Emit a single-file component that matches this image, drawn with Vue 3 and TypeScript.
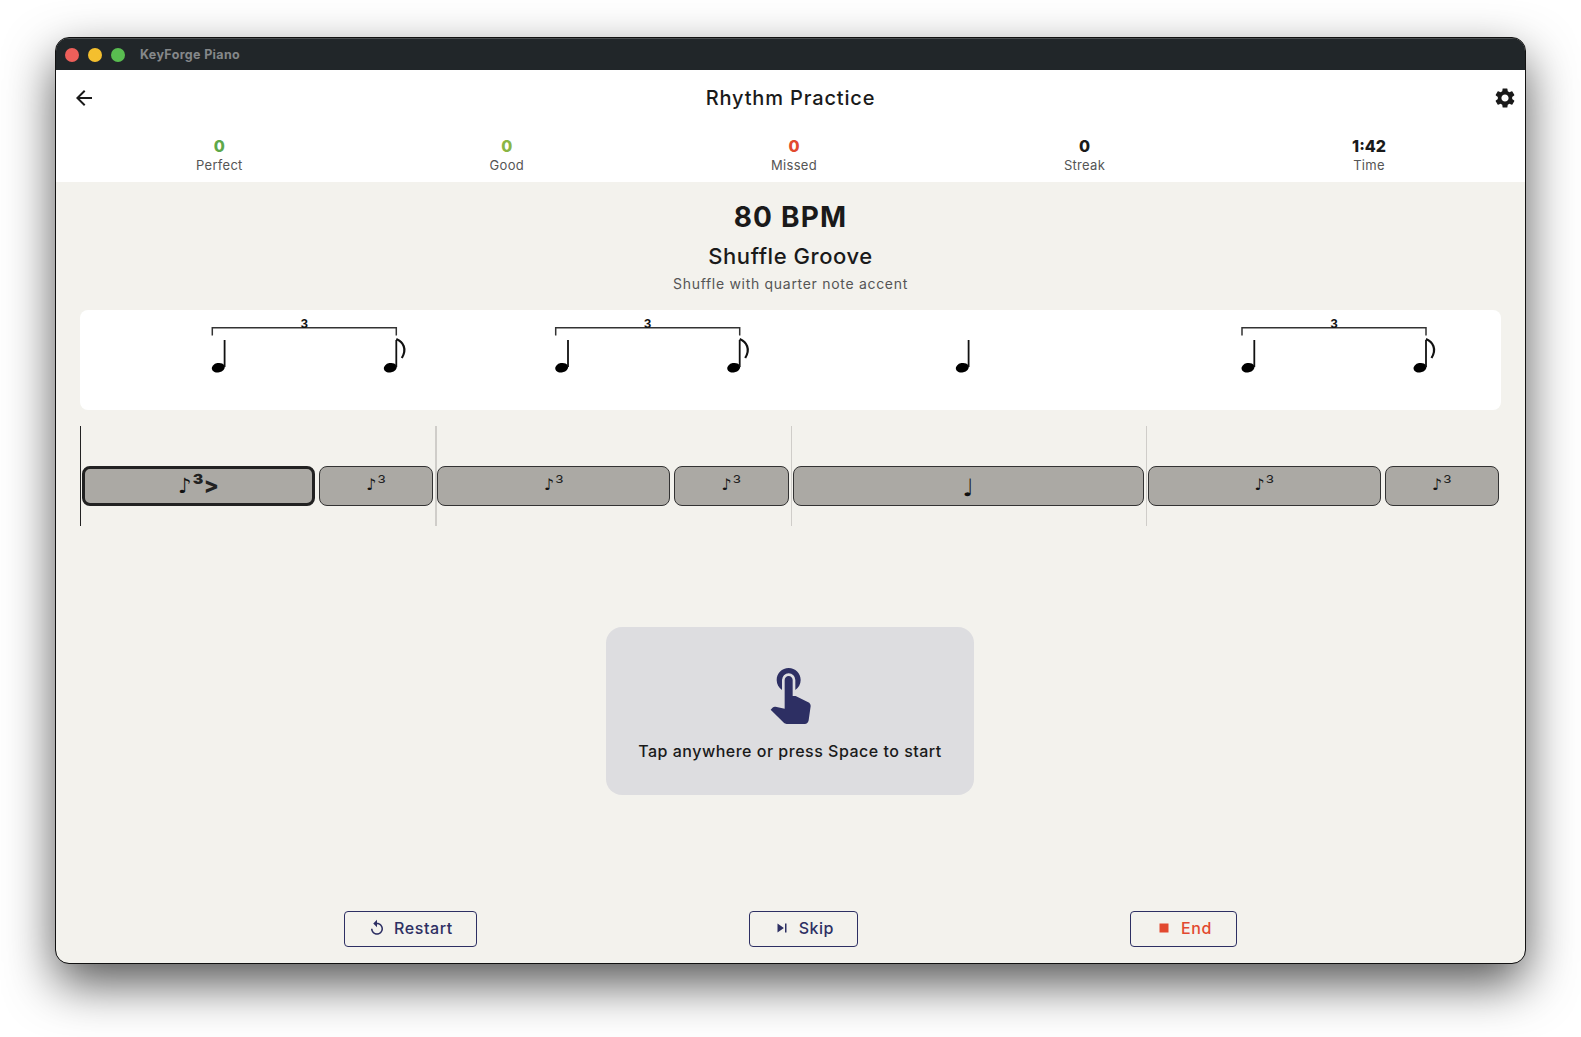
<template>
  <div class="page">
    <div class="window">
      <div class="titlebar">
        <span class="light red"></span>
        <span class="light yellow"></span>
        <span class="light green"></span>
        <span class="app-name">KeyForge Piano</span>
      </div>

      <header class="top">
        <div class="appbar">
          <svg class="icon back" viewBox="0 0 24 24"><path d="M20 11H7.83l5.59-5.59L12 4l-8 8 8 8 1.41-1.41L7.83 13H20v-2z" /></svg>
          <h1>Rhythm Practice</h1>
          <svg class="icon gear" viewBox="0 0 24 24"><path d="M19.14 12.94c.04-.3.06-.61.06-.94 0-.32-.02-.64-.07-.94l2.03-1.58a.49.49 0 0 0 .12-.61l-1.92-3.32a.488.488 0 0 0-.59-.22l-2.39.96c-.5-.38-1.03-.7-1.62-.94l-.36-2.54a.484.484 0 0 0-.48-.41h-3.84c-.24 0-.43.17-.47.41l-.36 2.54c-.59.24-1.13.57-1.62.94l-2.39-.96c-.22-.08-.47 0-.59.22L2.74 8.87c-.12.21-.08.47.12.61l2.03 1.58c-.05.3-.09.63-.09.94s.02.64.07.94l-2.03 1.58a.49.49 0 0 0-.12.61l1.92 3.32c.12.22.37.29.59.22l2.39-.96c.5.38 1.03.7 1.62.94l.36 2.54c.05.24.24.41.48.41h3.84c.24 0 .44-.17.47-.41l.36-2.54c.59-.24 1.13-.56 1.62-.94l2.39.96c.22.08.47 0 .59-.22l1.92-3.32c.12-.22.07-.47-.12-.61l-2.01-1.58zM12 15.6c-1.98 0-3.6-1.62-3.6-3.6s1.62-3.6 3.6-3.6 3.6 1.62 3.6 3.6-1.62 3.6-3.6 3.6z" /></svg>
        </div>
        <div class="stats">
          <div v-for="s in stats" :key="s.label" class="stat">
            <strong :style="{ color: s.color }">{{ s.value }}</strong>
            <span>{{ s.label }}</span>
          </div>
        </div>
      </header>

      <main class="body">
        <div class="bpm">80 BPM</div>
        <div class="name">Shuffle Groove</div>
        <div class="desc">Shuffle with quarter note accent</div>

        <div class="score">
          <svg width="1421" height="100" viewBox="0 0 1421 100">
            <g v-for="x in groups" :key="x">
              <path :d="`M${x} 25.5V17.7H${x + 184}V25.5`" class="bracket" />
              <text :x="x + 92" y="17.5" class="tuplet">3</text>
              <ellipse :cx="x + 6" cy="57.7" rx="6.6" ry="4.7" :transform="`rotate(-12 ${x + 6} 57.7)`" />
              <path :d="`M${x + 12.3} 30V57`" class="stem" />
              <ellipse :cx="x + 178" cy="57.7" rx="6.6" ry="4.7" :transform="`rotate(-12 ${x + 178} 57.7)`" />
              <path :d="`M${x + 184} 30V57`" class="stem" />
              <path :d="`M${x + 184} 29C${x + 191} 32 ${x + 195} 39 ${x + 189.5} 48`" class="flag" />
            </g>
            <ellipse cx="882.3" cy="57.7" rx="6.6" ry="4.7" transform="rotate(-12 882.3 57.7)" />
            <path d="M888.6 30V57" class="stem" />
          </svg>
        </div>

        <div class="timeline">
          <div v-for="b in blocks" :key="b.id" class="slot" :style="{ flexGrow: b.span }">
            <div class="block" :class="{ active: b.active, plain: !b.triplet }">
              <span class="note">{{ b.triplet ? '♪' : '♩' }}</span>
              <span v-if="b.triplet" class="three">³</span>
              <span v-if="b.active" class="accent">&gt;</span>
            </div>
          </div>
          <i v-for="(m, i) in 4" :key="m" class="bar" :class="{ now: i === 0 }" :style="{ left: i * 25 + '%' }"></i>
        </div>

        <div class="prompt-area">
          <div class="prompt">
            <svg class="hand" viewBox="0 0 24 24"><path d="M9 11.24V7.5a2.5 2.5 0 0 1 5 0v3.74c1.21-.81 2-2.18 2-3.74C16 5.01 13.99 3 11.5 3S7 5.01 7 7.5c0 1.56.79 2.93 2 3.74zm9.84 4.63l-4.54-2.26c-.17-.07-.35-.11-.54-.11H13v-6c0-.83-.67-1.5-1.5-1.5S10 6.67 10 7.5v10.74l-3.43-.72c-.08-.01-.15-.03-.24-.03-.31 0-.59.13-.79.33l-.79.8 4.94 4.94c.27.27.65.44 1.06.44h6.79c.75 0 1.33-.55 1.44-1.28l.75-5.27c.01-.07.02-.14.02-.2 0-.62-.38-1.16-.91-1.38z" /></svg>
            <p>Tap anywhere or press Space to start</p>
          </div>
        </div>

        <footer class="actions">
          <button class="btn">
            <svg viewBox="0 0 24 24"><path d="M12 5V1L7 6l5 5V7c3.31 0 6 2.69 6 6s-2.69 6-6 6-6-2.69-6-6H4c0 4.42 3.58 8 8 8s8-3.58 8-8-3.58-8-8-8z" /></svg>
            Restart
          </button>
          <button class="btn">
            <svg viewBox="0 0 24 24"><path d="M6 18l8.5-6L6 6v12zM16 6v12h2V6h-2z" /></svg>
            Skip
          </button>
          <button class="btn end">
            <svg viewBox="0 0 24 24"><path d="M6 6h12v12H6z" /></svg>
            End
          </button>
        </footer>
      </main>
    </div>
  </div>
</template>

<script setup lang="ts">
const stats = [
  { label: 'Perfect', value: '0', color: '#5ea84a' },
  { label: 'Good', value: '0', color: '#8ab545' },
  { label: 'Missed', value: '0', color: '#e2492f' },
  { label: 'Streak', value: '0', color: '#1a1a1a' },
  { label: 'Time', value: '1:42', color: '#1a1a1a' },
]

// left edge of each triplet bracket, card coordinates
const groups = [132.3, 475.7, 1162]

const blocks = [
  { id: 1, span: 2, triplet: true, active: true },
  { id: 2, span: 1, triplet: true },
  { id: 3, span: 2, triplet: true },
  { id: 4, span: 1, triplet: true },
  { id: 5, span: 3, triplet: false },
  { id: 6, span: 2, triplet: true },
  { id: 7, span: 1, triplet: true },
]
</script>

<style>
html,
body {
  background: #fff;
}
</style>

<style scoped>
.page {
  width: 1581px;
  height: 1037px;
  padding: 38px 56px 74px;
  box-sizing: border-box;
  font-family: Inter, "Liberation Sans", sans-serif;
  color: #1a1a1a;
  overflow: hidden;
}

.window {
  height: 100%;
  display: flex;
  flex-direction: column;
  border-radius: 13px;
  overflow: hidden;
  background: #f3f2ed;
  outline: 1px solid #111;
  box-shadow: 0 20px 50px rgba(0, 0, 0, 0.68);
}

.titlebar {
  height: 32px;
  display: flex;
  align-items: center;
  padding-left: 9px;
  gap: 9px;
  background: #212629;
  border-top: 1px solid #4a4e50;
  box-sizing: border-box;
  flex: none;
}

.light {
  width: 14px;
  height: 14px;
  border-radius: 50%;
}
.red { background: #ed5f5a; }
.yellow { background: #f4bf2e; }
.green { background: #59bd50; }

.app-name {
  margin-left: 6px;
  font: 700 12.5px "Inter", sans-serif;
  letter-spacing: 0.35px;
  color: #85888a;
}

.top {
  background: #fff;
  flex: none;
  height: 112px;
  box-sizing: border-box;
}

.appbar {
  height: 56px;
  display: grid;
  grid-template-columns: 1fr auto 1fr;
  align-items: center;
  padding: 0 8px;
}

.appbar h1 {
  margin: 0;
  font-size: 20px;
  font-weight: 500;
  letter-spacing: 0.85px;
}

.icon {
  width: 24px;
  height: 24px;
  fill: #1a1a1a;
}

.back {
  margin-left: 8px;
}

.gear {
  justify-self: end;
}

.stats {
  display: flex;
  justify-content: space-around;
  padding: 12px 15.5px 0 16.5px;
}

.stat {
  display: flex;
  flex-direction: column;
  align-items: center;
  gap: 2px;
}

.stat strong {
  font-size: 16px;
  line-height: 17px;
  font-weight: 800;
}

.stat span {
  font-size: 13px;
  line-height: 16px;
  color: #555;
  letter-spacing: 0.3px;
}

.body {
  flex: 1;
  min-height: 0;
  display: flex;
  flex-direction: column;
  align-items: stretch;
  text-align: center;
}

.bpm {
  margin-top: 18px;
  font-size: 28px;
  line-height: 34px;
  font-weight: 700;
  letter-spacing: 1.2px;
}

.name {
  margin-top: 7px;
  font-size: 22px;
  line-height: 30px;
  font-weight: 500;
  letter-spacing: 0.55px;
}

.desc {
  margin-top: 4px;
  font-size: 14px;
  line-height: 18px;
  color: #555;
  letter-spacing: 0.7px;
}

.score {
  margin: 17px 24px 0;
  height: 100px;
  background: #fff;
  border-radius: 8px;
}

.score svg {
  display: block;
}

.bracket {
  fill: none;
  stroke: #333;
  stroke-width: 1.5;
}

.tuplet {
  font: 700 13px "Liberation Sans", sans-serif;
  text-anchor: middle;
  fill: #111;
}

.stem {
  stroke: #111;
  stroke-width: 1.8;
}

.flag {
  fill: none;
  stroke: #111;
  stroke-width: 2.2;
}

.timeline {
  position: relative;
  display: flex;
  align-items: center;
  height: 100px;
  box-sizing: border-box;
  padding-top: 20px;
  margin: 16px 24px 0;
  flex: none;
}

.slot {
  flex-basis: 0;
  min-width: 0;
}

.block {
  height: 40px;
  margin: 0 2px;
  box-sizing: border-box;
  display: flex;
  align-items: center;
  justify-content: center;
  padding-bottom: 3px;
  background: #aba9a4;
  border: 1px solid #333;
  border-radius: 8px;
  line-height: 1;
  color: #222;
}

.note {
  font: 400 16px "DejaVu Sans", sans-serif;
  color: #111;
}

.three {
  font: 300 20px Inter, sans-serif;
  margin-top: 1px;
  margin-left: 1px;
}

.accent {
  font: 800 22px Inter, sans-serif;
  margin-top: -3px;
}

.block.active {
  border: 3px solid #222;
  padding-bottom: 0;
}

.block.active .note {
  font-size: 21px;
  font-weight: 700;
}

.block.active .three {
  font-size: 24px;
  font-weight: 800;
  margin-top: -2px;
}

.block.plain {
  padding: 3px 0 0;
}

.block.plain .note {
  font-size: 24px;
}

.bar {
  position: absolute;
  top: 0;
  bottom: 0;
  width: 1.5px;
  background: #cfcdc9;
}

.bar.now {
  width: 1px;
  background: #222;
}

.prompt-area {
  flex: 1;
  display: flex;
  align-items: center;
  justify-content: center;
  padding-right: 1px;
}

.prompt {
  width: 368px;
  height: 168px;
  display: flex;
  flex-direction: column;
  align-items: center;
  justify-content: center;
  box-sizing: border-box;
  background: #dddde0;
  border-radius: 16px;
}

.hand {
  width: 64px;
  height: 64px;
  fill: #2d2f63;
}

.prompt p {
  margin: 16px 0 0;
  font-size: 16px;
  font-weight: 500;
  line-height: 22px;
  letter-spacing: 0.5px;
}

.actions {
  flex: none;
  display: flex;
  justify-content: center;
  gap: 272px;
  padding: 16px 0;
}

.btn {
  height: 36px;
  padding: 0 23px 2px;
  display: flex;
  align-items: center;
  gap: 8px;
  background: transparent;
  border: 1px solid #2d2f63;
  border-radius: 4px;
  font: 500 16px Inter, sans-serif;
  letter-spacing: 0.55px;
  color: #2d2f63;
}

.btn svg {
  width: 18px;
  height: 18px;
  fill: currentColor;
}

.btn.end {
  padding: 0 24px 2px;
  color: #e2492f;
}
</style>
